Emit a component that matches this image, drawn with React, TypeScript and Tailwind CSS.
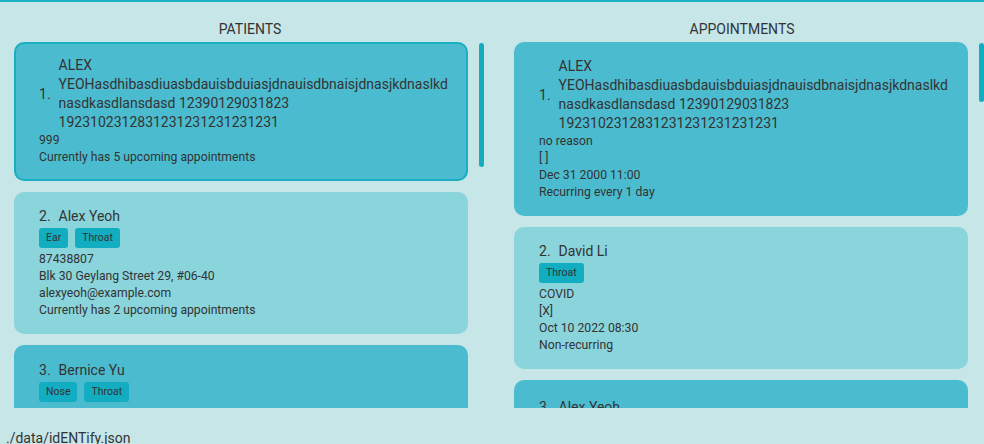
import React from "react";

type Card = {
  no: number;
  name: string[];
  tags?: string[];
  lines: string[];
  selected?: boolean;
  tone: "dark" | "light";
  pt?: string;
};

const patients: Card[] = [
  {
    no: 1,
    name: [
      "ALEX",
      "YEOHasdhibasdiuasbdauisbduiasjdnauisdbnaisjdnasjkdnaslkd",
      "nasdkasdlansdasd 12390129031823",
      "1923102312831231231231231231",
    ],
    lines: ["999", "Currently has 5 upcoming appointments"],
    selected: true,
    tone: "dark",
  },
  {
    no: 2,
    name: ["Alex Yeoh"],
    tags: ["Ear", "Throat"],
    lines: [
      "87438807",
      "Blk 30 Geylang Street 29, #06-40",
      "alexyeoh@example.com",
      "Currently has 2 upcoming appointments",
    ],
    tone: "light",
  },
  {
    no: 3,
    name: ["Bernice Yu"],
    tags: ["Nose", "Throat"],
    lines: [],
    tone: "dark",
    pt: "pt-[16px]",
  },
];

const appointments: Card[] = [
  {
    no: 1,
    name: [
      "ALEX",
      "YEOHasdhibasdiuasbdauisbduiasjdnauisdbnaisjdnasjkdnaslkd",
      "nasdkasdlansdasd 12390129031823",
      "1923102312831231231231231231",
    ],
    lines: ["no reason", "[ ]", "Dec 31 2000 11:00", "Recurring every 1 day"],
    tone: "dark",
  },
  {
    no: 2,
    name: ["David Li"],
    tags: ["Throat"],
    lines: ["COVID", "[X]", "Oct 10 2022 08:30", "Non-recurring"],
    tone: "light",
  },
  {
    no: 3,
    name: ["Alex Yeoh"],
    lines: [],
    tone: "dark",
    pt: "pt-[18px]",
  },
];

function ListCard({ card }: { card: Card }) {
  const bg = card.tone === "dark" ? "bg-[#4bbccf]" : "bg-[#8ad4dc]";
  const box = card.selected
    ? "border-2 border-[#1aaec3] pt-[12px] pb-[13px] px-[23px]"
    : `${card.pt ?? "pt-[15px]"} pb-[15px] px-[25px]`;

  return (
    <div className={`shrink-0 rounded-[10px] ${bg} ${box}`}>
      <div className="flex items-center gap-[8px] text-[14px] leading-[19px]">
        <span>{card.no}.</span>
        <div>
          {card.name.map((l, i) => (
            <div key={i} className="whitespace-nowrap">
              {l}
            </div>
          ))}
        </div>
      </div>
      {card.tags && (
        <div className="flex gap-[7px] mt-[2px] mb-[3px]">
          {card.tags.map((t) => (
            <span
              key={t}
              className="h-[20px] px-[7px] rounded-[3px] bg-[#12adc1] text-[10.5px] leading-[20px]"
            >
              {t}
            </span>
          ))}
        </div>
      )}
      {card.lines.length > 0 && (
        <div className="text-[12.2px] leading-[17px]">
          {card.lines.map((l, i) => (
            <div key={i}>{l}</div>
          ))}
        </div>
      )}
    </div>
  );
}

function Column({
  title,
  cards,
  thumb,
  className,
}: {
  title: string;
  cards: Card[];
  thumb: string;
  className: string;
}) {
  return (
    <div className={`flex flex-col ${className}`}>
      <div className="h-[40px] pt-[17px] text-center text-[14px] leading-[20px]">
        {title}
      </div>
      <div className="flex h-[366px] overflow-hidden">
        <div className="ml-[14px] w-[454px] flex flex-col gap-[11px]">
          {cards.map((c) => (
            <ListCard key={c.no} card={c} />
          ))}
        </div>
        <div className={`ml-[11px] w-[5px] mt-[1px] rounded-full bg-[#12adc1] ${thumb}`} />
      </div>
    </div>
  );
}

export default function App() {
  return (
    <div className="w-[984px] h-[444px] overflow-hidden bg-[#c6e6e8] text-[#333333] font-['Roboto',sans-serif] flex flex-col">
      <div className="h-[2px] shrink-0 bg-[#1ab0c4]" />
      <div className="flex shrink-0">
        <Column title="PATIENTS" cards={patients} thumb="h-[124px]" className="w-[500px]" />
        <Column title="APPOINTMENTS" cards={appointments} thumb="h-[59px]" className="w-[484px]" />
      </div>
      <div className="shrink-0 pt-[21px] px-[6px] text-[14px] leading-[18px] whitespace-nowrap">
        ./data/idENTify.json
      </div>
    </div>
  );
}
